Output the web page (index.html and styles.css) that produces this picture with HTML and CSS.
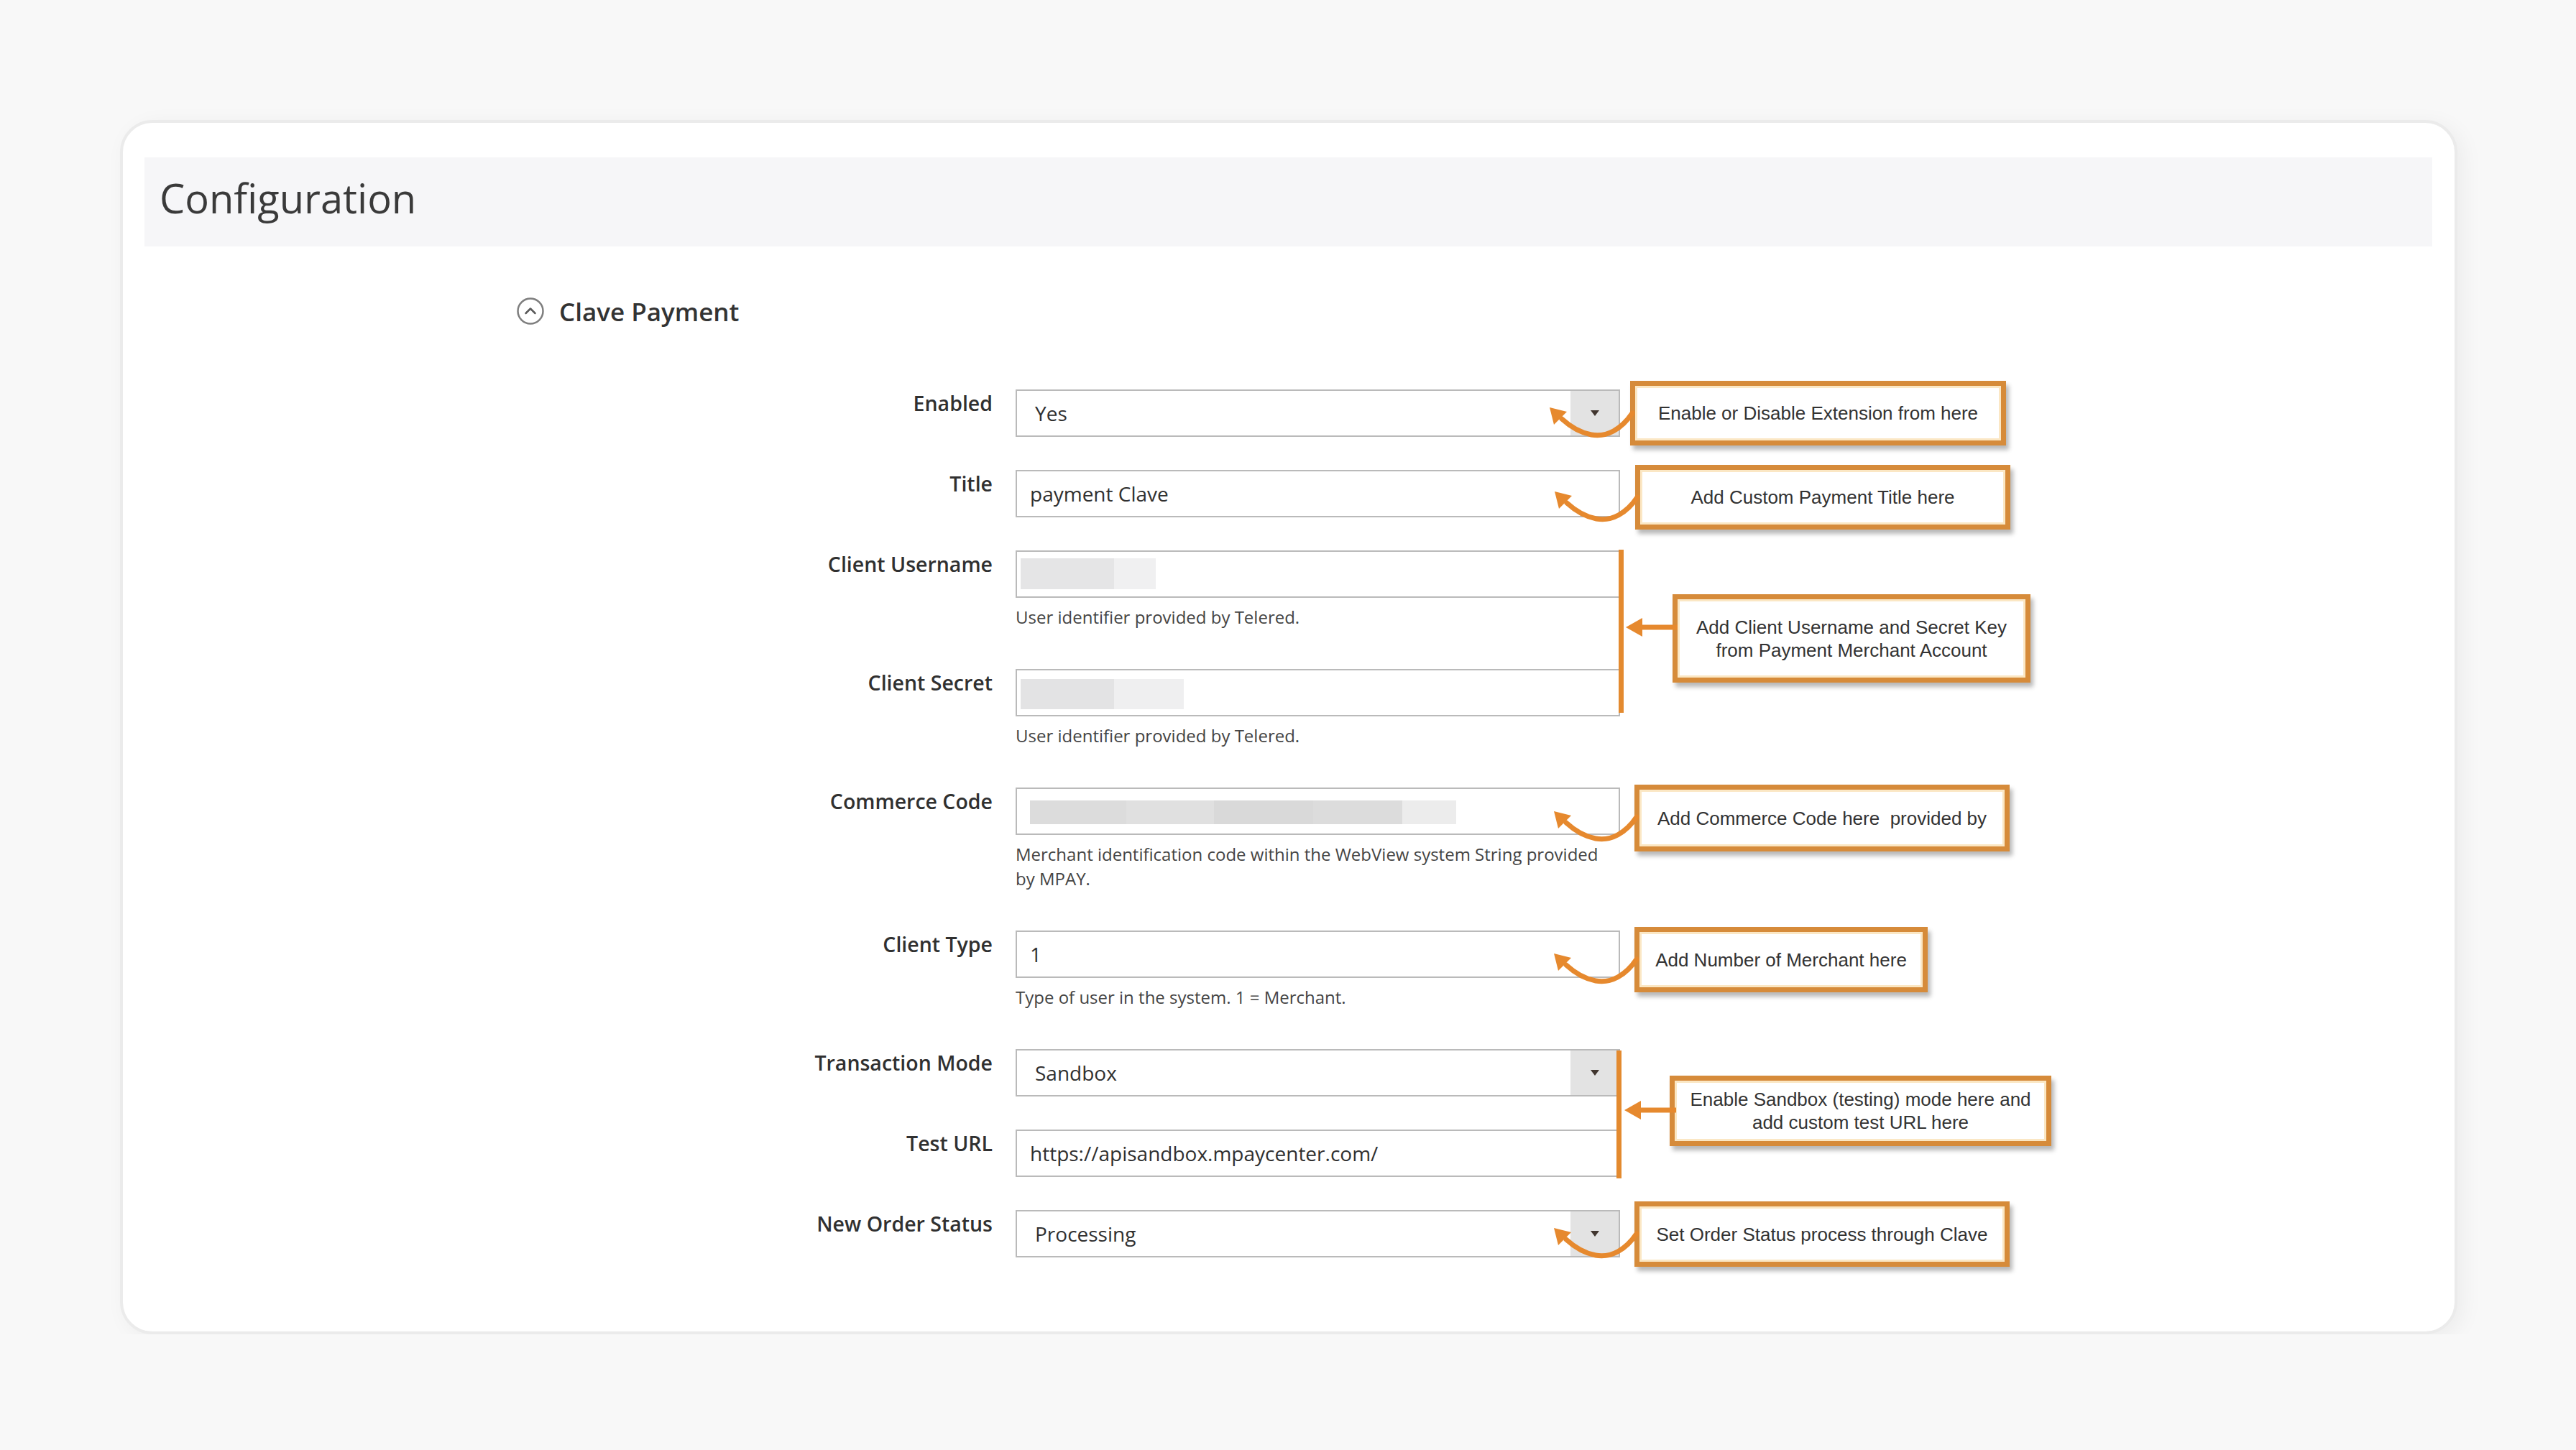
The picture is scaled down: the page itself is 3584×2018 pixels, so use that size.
FILE: index.html
```html
<!DOCTYPE html>
<html lang="en">
<head>
    <meta charset="UTF-8">
    <meta name="viewport" content="width=device-width, initial-scale=1.0">
    <title>Configuration</title>
    <link rel="stylesheet" href="styles.css">
</head>
<body>
    <div class="card">
        <div class="page-head">
            <h1>Configuration</h1>
        </div>

        <div class="section-title">
            <svg class="section-toggle" viewBox="0 0 40 40"><circle cx="20" cy="20" r="17.5" /><polyline points="13.5,23 20,16.5 26.5,23" /></svg>
            <span>Clave Payment</span>
        </div>

        <div class="fields">
            <div class="field">
                <label>Enabled</label>
                <div class="control">
                    <div class="select"><span class="value">Yes</span><span class="select-arrow"></span></div>
                </div>
            </div>
            <div class="field">
                <label>Title</label>
                <div class="control">
                    <div class="input"><span class="value">payment Clave</span></div>
                </div>
            </div>
            <div class="field">
                <label>Client Username</label>
                <div class="control">
                    <div class="input input--masked">
                        <span class="mask mask--user-a"></span><span class="mask mask--user-b"></span>
                    </div>
                    <div class="note">User identifier provided by Telered.</div>
                </div>
            </div>
            <div class="field">
                <label>Client Secret</label>
                <div class="control">
                    <div class="input input--masked">
                        <span class="mask mask--secret-a"></span><span class="mask mask--secret-b"></span>
                    </div>
                    <div class="note">User identifier provided by Telered.</div>
                </div>
            </div>
            <div class="field">
                <label>Commerce Code</label>
                <div class="control">
                    <div class="input input--masked input--code">
                        <span class="mask mask--code-a"></span><span class="mask mask--code-b"></span><span class="mask mask--code-c"></span><span class="mask mask--code-d"></span><span class="mask mask--code-e"></span>
                    </div>
                    <div class="note">Merchant identification code within the WebView system String provided<br>by MPAY.</div>
                </div>
            </div>
            <div class="field">
                <label>Client Type</label>
                <div class="control">
                    <div class="input"><span class="value">1</span></div>
                    <div class="note">Type of user in the system. 1 = Merchant.</div>
                </div>
            </div>
            <div class="field">
                <label>Transaction Mode</label>
                <div class="control">
                    <div class="select"><span class="value">Sandbox</span><span class="select-arrow"></span></div>
                </div>
            </div>
            <div class="field">
                <label>Test URL</label>
                <div class="control">
                    <div class="input"><span class="value">https://apisandbox.mpaycenter.com/</span></div>
                </div>
            </div>
            <div class="field">
                <label>New Order Status</label>
                <div class="control">
                    <div class="select"><span class="value">Processing</span><span class="select-arrow"></span></div>
                </div>
            </div>
        </div>

        <!-- annotations drawn over the form -->
        <div class="bracket bracket--client"></div>
        <div class="bracket bracket--sandbox"></div>

        <div class="callout callout--enabled">
            <svg class="curl" viewBox="0 0 125 60"><path d="M123 20 C108 42 88 54 66 50 C50 47 37 39 25 28" /><polygon points="8,12 32,18 14,36" /></svg>
            Enable or Disable Extension from here
        </div>
        <div class="callout callout--title">
            <svg class="curl" viewBox="0 0 125 60"><path d="M123 20 C108 42 88 54 66 50 C50 47 37 39 25 28" /><polygon points="8,12 32,18 14,36" /></svg>
            Add Custom Payment Title here
        </div>
        <div class="callout callout--client">
            <svg class="pointer" viewBox="0 0 75 30"><path d="M75 15 L20 15" /><polygon points="3,15 26,2 26,28" /></svg>
            Add Client Username and Secret Key<br>from Payment Merchant Account
        </div>
        <div class="callout callout--commerce">
            <svg class="curl" viewBox="0 0 125 60"><path d="M123 20 C108 42 88 54 66 50 C50 47 37 39 25 28" /><polygon points="8,12 32,18 14,36" /></svg>
            Add Commerce Code here&nbsp; provided by
        </div>
        <div class="callout callout--type">
            <svg class="curl" viewBox="0 0 125 60"><path d="M123 20 C108 42 88 54 66 50 C50 47 37 39 25 28" /><polygon points="8,12 32,18 14,36" /></svg>
            Add Number of Merchant here
        </div>
        <div class="callout callout--sandbox">
            <svg class="pointer" viewBox="0 0 75 30"><path d="M75 15 L20 15" /><polygon points="3,15 26,2 26,28" /></svg>
            Enable Sandbox (testing) mode here and<br>add custom test URL here
        </div>
        <div class="callout callout--status">
            <svg class="curl" viewBox="0 0 125 60"><path d="M123 20 C108 42 88 54 66 50 C50 47 37 39 25 28" /><polygon points="8,12 32,18 14,36" /></svg>
            Set Order Status process through Clave
        </div>
    </div>
</body>
</html>
```

FILE: styles.css
```css
*, *::before, *::after {
    box-sizing: border-box;
}
body { margin: 0; background: #f8f8f8; font-family: "Open Sans", sans-serif; color: #333; }

.card {
    position: relative;
    margin: 167px 0 0 167px;
    width: 3252px;
    padding: 48px 31px 103px 30px;
    background: #fff;
    border: 4px solid #ebebeb;
    border-radius: 45px;
    box-shadow: 8px 6px 30px rgba(0, 0, 0, 0.05);
}
.page-head {
    height: 124px;
    padding: 18px 0 0 21px;
    background: #f6f6f8;
}
.page-head h1 { margin: 0; font-size: 56px; line-height: 76px; font-weight: 400; color: #3a3a3a; }

.section-title {
    display: flex;
    align-items: center;
    gap: 20px;
    margin: 66px 0 0 517px;
    height: 48px;
    font-size: 35px;
    font-weight: 600;
    color: #333;
}
.section-toggle { width: 40px; height: 40px; fill: none; stroke-linecap: round; stroke-linejoin: round; }
.section-toggle circle { stroke: #7e7e7e; stroke-width: 2.5; }
.section-toggle polyline { stroke: #5a5a5a; stroke-width: 2.5; }

.fields { margin-top: 85px; }
.field {
    display: grid;
    grid-template-columns: 1180px 841px;
    column-gap: 32px;
    margin-bottom: 46px;
}
.field:last-child { margin-bottom: 0; }
.field label {
    padding-top: 1px;
    text-align: right;
    font-size: 28.5px;
    line-height: 36px;
    font-weight: 600;
    color: #303030;
}
.input, .select {
    display: flex;
    align-items: center;
    height: 66px;
    background: #fff;
    border: 2px solid #bababa;
    font-size: 28px;
    color: #303030;
}
.input { padding-left: 18px; }
.select .value { flex: 1; padding-left: 25px; }
.select-arrow {
    display: flex;
    align-items: center;
    justify-content: center;
    width: 67px;
    height: 100%;
    background: #e3e3e3;
}
.select-arrow::after {
    content: "";
    border-left: 6px solid transparent;
    border-right: 6px solid transparent;
    border-top: 8px solid #41362f;
}
.input--masked { padding-left: 5px; align-items: flex-start; padding-top: 9px; }
.input--code { padding-left: 18px; padding-top: 16px; }
.mask { display: block; }
.mask--user-a { width: 130px; height: 43px; background: #e5e5e6; }
.mask--user-b { width: 58px; height: 43px; background: #f0f0f1; }
.mask--secret-a { width: 130px; height: 42px; background: #e3e3e4; margin-top: 3px; }
.mask--secret-b { width: 97px; height: 42px; background: #efeff0; margin-top: 3px; }
.mask--code-a { width: 134px; height: 33px; background: #dcdcdc; }
.mask--code-b { width: 122px; height: 33px; background: #e0e0e0; }
.mask--code-c { width: 138px; height: 33px; background: #d9d9d9; }
.mask--code-d { width: 124px; height: 33px; background: #dcdcdc; }
.mask--code-e { width: 75px; height: 33px; background: #ececec; }

.note {
    margin: 10px 0 9px;
    font-size: 24px;
    line-height: 34px;
    color: #444;
}

/* annotations */
.bracket { position: absolute; width: 7px; background: #e38a2f; }
.bracket--client { left: 2081px; top: 594px; height: 227px; }
.bracket--sandbox { left: 2078px; top: 1291px; height: 178px; }

.callout {
    position: absolute;
    display: flex;
    align-items: center;
    justify-content: center;
    text-align: center;
    background: #fff;
    border: 7px solid #d68b3a;
    box-shadow: 4px 6px 6px rgba(0, 0, 0, 0.28), inset 0 0 0 3px #fbe7c4;
    font-family: "Liberation Sans", Arial, sans-serif;
    font-size: 26px;
    line-height: 32px;
    color: #333;
}
.callout--enabled { left: 2097px; top: 359px; width: 523px; height: 90px; }
.callout--title { left: 2104px; top: 476px; width: 522px; height: 90px; }
.callout--client { left: 2156px; top: 656px; width: 498px; height: 123px; }
.callout--commerce { left: 2103px; top: 921px; width: 522px; height: 93px; }
.callout--type { left: 2103px; top: 1119px; width: 408px; height: 91px; }
.callout--sandbox { left: 2152px; top: 1326px; width: 531px; height: 98px; }
.callout--status { left: 2103px; top: 1501px; width: 522px; height: 91px; }

.curl { position: absolute; left: -127px; top: 18px; width: 125px; height: 60px; overflow: visible; }
.curl path { fill: none; stroke: #e6892e; stroke-width: 7; stroke-linecap: round; }
.curl polygon { fill: #e6892e; }

.pointer { position: absolute; top: 24px; width: 75px; height: 30px; overflow: visible; }
.callout--client .pointer { left: -75px; top: 24px; }
.callout--sandbox .pointer { left: -73px; top: 26px; }
.pointer path { fill: none; stroke: #e6892e; stroke-width: 7; }
.pointer polygon { fill: #e6892e; }
```
